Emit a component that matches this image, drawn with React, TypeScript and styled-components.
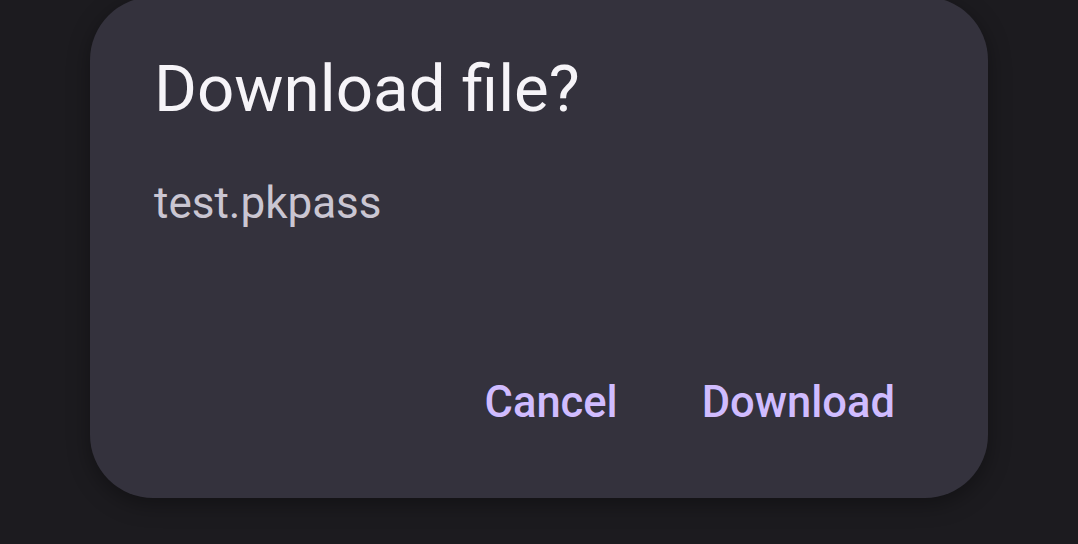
import styled, { createGlobalStyle } from 'styled-components';

const GlobalStyle = createGlobalStyle`
  html, body {
    margin: 0;
    padding: 0;
    background-color: #1c1b1f;
    overflow: hidden;
  }
  body {
    font-family: Roboto, "Noto Sans", "Liberation Sans", sans-serif;
  }
`;

const Screen = styled.div`
  width: 1078px;
  height: 544px;
  display: flex;
  justify-content: center;
  align-items: flex-start;
  background-color: #1c1b1f;
`;

const Dialog = styled.div`
  display: flex;
  flex-direction: column;
  box-sizing: border-box;
  width: 898px;
  height: 501px;
  margin-top: -3px;
  padding: 52px 61px 68px 64px;
  background-color: #34323d;
  border-radius: 63px;
  box-shadow: 0px 6px 22px rgba(0, 0, 0, 0.35);
`;

const Title = styled.h2`
  margin: 0;
  font-size: 65.5px;
  line-height: 80px;
  font-weight: 400;
  color: #f6f4f8;
`;

const FileName = styled.p`
  margin: 46px 0 0 0;
  font-size: 44px;
  line-height: 56px;
  font-weight: 400;
  color: #cac6d2;
`;

const Actions = styled.div`
  display: flex;
  justify-content: flex-end;
  gap: 20px;
  margin-top: auto;
`;

const TextButton = styled.button`
  padding: 0 32px;
  border: none;
  background: none;
  font-family: inherit;
  font-size: 43.5px;
  line-height: 54px;
  font-weight: 500;
  color: #d0bcff;
`;

const App = () => {
  return (
    <Screen>
      <GlobalStyle />
      <Dialog>
        <Title>Download file?</Title>
        <FileName>test.pkpass</FileName>
        <Actions>
          <TextButton>Cancel</TextButton>
          <TextButton>Download</TextButton>
        </Actions>
      </Dialog>
    </Screen>
  );
};

export default App;
